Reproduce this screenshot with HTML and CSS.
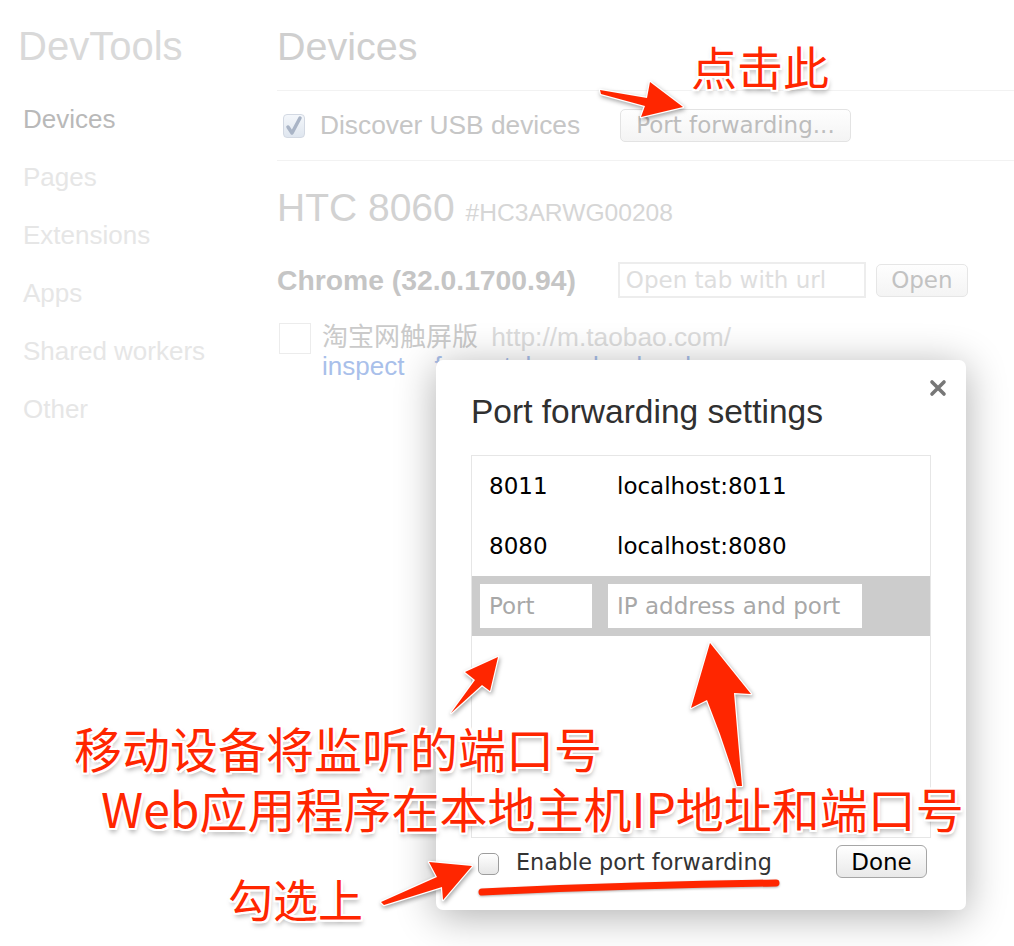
FILE: index.html
```html
<!DOCTYPE html>
<html lang="zh-CN">
<head>
    <meta charset="UTF-8">
    <title>DevTools - Devices</title>
    <link rel="stylesheet" href="styles.css">
</head>
<body>
    <div class="page">
        <nav class="sidebar">
            <h1 class="brand">DevTools</h1>
            <ul class="nav">
                <li class="active">Devices</li>
                <li>Pages</li>
                <li>Extensions</li>
                <li>Apps</li>
                <li>Shared workers</li>
                <li>Other</li>
            </ul>
        </nav>

        <main class="content">
            <h2 class="content-title">Devices</h2>

            <div class="discover-row">
                <span class="check checked">
                    <svg width="22" height="24" viewBox="0 0 22 24"><path d="M5 13 L9 19 L17 4" fill="none" stroke="#a9b4c6" stroke-width="3.5" stroke-linecap="round" stroke-linejoin="round"/></svg>
                </span>
                <span class="discover-label">Discover USB devices</span>
                <button class="pf-button">Port forwarding...</button>
            </div>

            <section class="device">
                <div class="device-name">HTC 8060 <span class="serial">#HC3ARWG00208</span></div>
                <div class="browser-row">
                    <span class="browser-name">Chrome (32.0.1700.94)</span>
                    <input class="url-input" type="text" placeholder="Open tab with url">
                    <button class="open-button">Open</button>
                </div>
                <div class="page-row">
                    <span class="thumb"></span>
                    <div class="page-info">
                        <div class="page-title">淘宝网触屏版 <span class="page-url">http://m.taobao.com/</span></div>
                        <div class="actions">
                            <span>inspect</span>
                            <span>focus tab</span>
                            <span>reload</span>
                            <span>close</span>
                        </div>
                    </div>
                </div>
            </section>
        </main>
    </div>

    <!-- Port forwarding dialog -->
    <div class="dialog">
        <span class="close">
            <svg width="18" height="18" viewBox="0 0 18 18"><path d="M3 3 L15 15 M15 3 L3 15" stroke="#777" stroke-width="3.6" stroke-linecap="round"/></svg>
        </span>
        <h3 class="dialog-title">Port forwarding settings</h3>
        <div class="rules">
            <div class="rule"><span class="rule-port">8011</span><span>localhost:8011</span></div>
            <div class="rule"><span class="rule-port">8080</span><span>localhost:8080</span></div>
            <div class="rule new-rule">
                <input class="port-input" type="text" placeholder="Port">
                <input class="addr-input" type="text" placeholder="IP address and port">
            </div>
        </div>
        <div class="dialog-footer">
            <label class="enable"><span class="box"></span>Enable port forwarding</label>
            <button class="done">Done</button>
        </div>
    </div>

    <!-- annotations -->
    <div class="note note-click">点击此</div>
    <div class="note note-port">移动设备将监听的端口号</div>
    <div class="note note-addr">Web应用程序在本地主机IP地址和端口号</div>
    <div class="note note-check">勾选上</div>

    <svg class="arrows" width="1014" height="946" viewBox="0 0 1014 946">
        <g class="arrow">
            <path d="M600,90 L647,98 L650,82 L683,107 L641,117 L645,106 L601,94 Z"/>
            <path d="M451,713 L475,680 L465,672 L498,657 L490,691 L482,685 Z"/>
            <path d="M710,643 L751,694 L734,693 Q738,740 742,786 L737,786 Q724,742 707,700 L691,708 Z"/>
            <path d="M381,902 L437,877 L429,862 L472,866 L443,900 L442,887 L384,905 Z"/>
        </g>
        <path class="underline" d="M482,892 Q630,885 776,883"/>
    </svg>
</body>
</html>
```

FILE: styles.css
```css
:root {
    --red: #ff2600;
    --faint: #e6e6e6;
}

body {
    margin: 0;
    width: 1014px;
    height: 946px;
    overflow: hidden;
    background: #fff;
    font-family: "Liberation Sans", Arial, sans-serif;
    position: relative;
}

/* Faded page behind the dialog */
.page {
    display: flex;
}

.sidebar {
    width: 277px;
    flex-shrink: 0;
    padding-left: 18px;
    box-sizing: border-box;
}

.brand {
    margin: 27px 0 25px;
    font-size: 40px;
    line-height: 38px;
    font-weight: normal;
    color: #d9d9d9;
}

.nav {
    list-style: none;
    margin: 0;
    padding: 0 0 0 5px;
}

.nav li {
    font-size: 26px;
    line-height: 58px;
    color: var(--faint);
}

.nav li.active {
    color: #b9b9b9;
}

.content {
    flex: 1;
}

.content-title {
    margin: 0;
    padding: 27px 0 25px;
    font-size: 39.5px;
    line-height: 38px;
    font-weight: normal;
    color: #cfcfcf;
    border-bottom: 1px solid #f2f2f2;
}

.discover-row {
    display: flex;
    align-items: center;
    height: 69px;
    border-bottom: 1px solid #f2f2f2;
}

.check {
    width: 22px;
    height: 24px;
    margin-left: 6px;
    border: 1px solid #d3d9e3;
    border-radius: 4px;
    background: linear-gradient(#f4f7fb, #dfe6ef);
    box-sizing: border-box;
    display: flex;
}

.check svg {
    margin: -1px;
}

.discover-label {
    margin-left: 15px;
    font-size: 26.3px;
    color: #c6c6c6;
}

.pf-button {
    margin-left: 40px;
    height: 33px;
    padding: 0 15px;
    border: 1px solid #e3e3e3;
    border-radius: 5px;
    background: linear-gradient(#fefefe, #f4f4f4);
    font-family: "DejaVu Sans", sans-serif;
    font-size: 23px;
    line-height: 31px;
    color: #bdbdbd;
}

.device-name {
    margin-top: 28px;
    font-size: 39px;
    line-height: 38px;
    color: #d2d2d2;
}

.serial {
    font-size: 24.6px;
    color: #d6d6d6;
}

.browser-row {
    display: flex;
    align-items: center;
    margin-top: 30px;
    height: 36px;
}

.browser-name {
    font-size: 28.3px;
    font-weight: bold;
    color: #c5c5c5;
}

.url-input {
    margin-left: 42px;
    width: 248px;
    height: 36px;
    box-sizing: border-box;
    border: 2px solid #ededed;
    padding: 0 6px;
    font-family: "DejaVu Sans", sans-serif;
    font-size: 23px;
}

.url-input::placeholder {
    color: #dedede;
}

.open-button {
    margin-left: 10px;
    width: 92px;
    height: 33px;
    border: 1px solid #e6e6e6;
    border-radius: 5px;
    background: linear-gradient(#fefefe, #f4f4f4);
    font-family: "DejaVu Sans", sans-serif;
    font-size: 23px;
    color: #c2c2c2;
    padding: 0;
}

.page-row {
    display: flex;
    margin-top: 25px;
}

.thumb {
    width: 32px;
    height: 31px;
    margin-left: 2px;
    border: 1px solid #ececec;
    box-sizing: border-box;
}

.page-info {
    margin-left: 11px;
}

.page-title {
    font-size: 26px;
    line-height: 28px;
    color: #cacaca;
    font-family: "Liberation Sans", "Noto Sans CJK SC", sans-serif;
}

.page-url {
    margin-left: 6px;
    font-size: 26.3px;
    color: #dcdcdc;
}

.actions {
    display: flex;
    gap: 30px;
    font-size: 26px;
    line-height: 30px;
    color: #a9c0ea;
}

/* Dialog */
.dialog {
    position: absolute;
    left: 436px;
    top: 360px;
    width: 530px;
    height: 550px;
    box-sizing: border-box;
    padding: 32px 35px 0;
    background: #fff;
    border-radius: 7px;
    box-shadow: 0 6px 40px rgba(0, 0, 0, 0.32);
    display: flex;
    flex-direction: column;
}

.close {
    position: absolute;
    right: 19px;
    top: 19px;
    display: flex;
}

.dialog-title {
    margin: 0;
    font-size: 33.5px;
    line-height: 40px;
    font-weight: normal;
    color: #303030;
}

.rules {
    margin-top: 23px;
    height: 383px;
    border: 1px solid #e6e6e6;
    box-sizing: border-box;
    font-family: "DejaVu Sans", sans-serif;
    font-size: 23px;
    color: #000;
}

.rule {
    display: flex;
    align-items: center;
    height: 60px;
    padding-left: 17px;
}

.rule-port {
    width: 128px;
}

.new-rule {
    background: #cccccc;
    padding-left: 8px;
    gap: 16px;
}

.new-rule input {
    height: 44px;
    box-sizing: border-box;
    border: none;
    padding: 0 9px;
    font-family: "DejaVu Sans", sans-serif;
    font-size: 23px;
    background: #fff;
}

.new-rule input::placeholder {
    color: #a8a8a8;
}

.port-input {
    width: 112px;
}

.addr-input {
    width: 254px;
}

.dialog-footer {
    display: flex;
    justify-content: space-between;
    align-items: center;
    margin-top: 7px;
    height: 33px;
    padding-right: 4px;
}

.enable {
    display: flex;
    align-items: center;
    font-family: "DejaVu Sans", sans-serif;
    font-size: 22.3px;
    color: #333;
    margin-left: 7px;
}

.enable .box {
    width: 21px;
    height: 22px;
    margin: 5px 17px 0 0;
    border: 1px solid #9d9d9d;
    border-radius: 5px;
    background: linear-gradient(#fff, #e6e6e6);
    box-sizing: border-box;
}

.done {
    width: 91px;
    height: 33px;
    border: 1px solid #a6a6a6;
    border-radius: 6px;
    background: linear-gradient(#ffffff, #e9e9e9);
    font-family: "DejaVu Sans", sans-serif;
    font-size: 23px;
    color: #000;
    padding: 0;
}

/* Annotations laid over the screenshot */
.note {
    position: absolute;
    font-family: "Noto Sans CJK SC", sans-serif;
    font-weight: 400;
    line-height: 1;
    color: var(--red);
    white-space: nowrap;
    text-shadow:
        2px 0 0 #fff, -2px 0 0 #fff, 0 2px 0 #fff, 0 -2px 0 #fff,
        2px 2px 0 #fff, -2px -2px 0 #fff, 2px -2px 0 #fff, -2px 2px 0 #fff,
        1px 4px 5px rgba(0, 0, 0, 0.35);
}

.note-click {
    left: 691px;
    top: 42px;
    font-size: 46px;
}

.note-port {
    left: 74px;
    top: 723px;
    font-size: 48px;
}

.note-addr {
    left: 101px;
    top: 783px;
    font-size: 48px;
}

.note-check {
    left: 228px;
    top: 876px;
    font-size: 45px;
}

.arrows {
    position: absolute;
    left: 0;
    top: 0;
    pointer-events: none;
}

.arrow path {
    fill: var(--red);
    stroke: #fff;
    stroke-width: 2.5;
    stroke-linejoin: round;
    paint-order: stroke;
    filter: drop-shadow(1px 2px 2px rgba(0, 0, 0, 0.35));
}

.underline {
    fill: none;
    stroke: var(--red);
    stroke-width: 7;
    stroke-linecap: round;
    filter: drop-shadow(0 1px 1px rgba(0, 0, 0, 0.3));
}
```
